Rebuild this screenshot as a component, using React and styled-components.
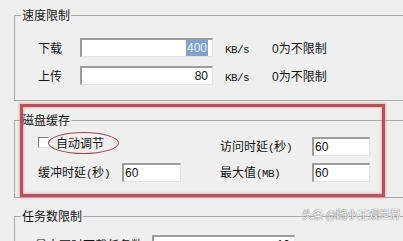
import React from 'react';
import styled, { createGlobalStyle } from 'styled-components';

const Global = createGlobalStyle`
  html, body { margin: 0; padding: 0; background: #efefef; }
  body {
    overflow: hidden;
    font-family: "Noto Sans CJK SC", "Noto Sans", sans-serif;
    font-size: 12px;
    color: #141414;
  }
`;

const Page = styled.div`
  position: relative;
  width: 403px;
  height: 241px;
  overflow: hidden;
  background: #efefef;
  padding-top: 8px;
  box-sizing: border-box;
`;

const Group = styled.fieldset`
  margin: ${(p) => p.$mt || 0}px 0 0 14px;
  width: 440px;
  box-sizing: border-box;
  border: 1px solid #a9a9a9;
  padding: 0;
  min-width: 0;
`;

const Legend = styled.legend`
  margin-left: 6px;
  padding: 0 1px;
  line-height: 14px;
  font-size: 12px;
`;

const Mono = styled.span`
  font-family: "Liberation Mono", "DejaVu Sans Mono", monospace;
  font-size: 11px;
  letter-spacing: -0.6px;
`;

const Digit = styled.span`
  font-family: "Liberation Sans", Arial, sans-serif;
  font-size: 12px;
`;

const SpeedBody = styled.div`
  display: flex;
  flex-direction: column;
  gap: 9px;
  padding: 16px 0 15px 23px;
`;

const Row = styled.div`
  display: flex;
  align-items: center;
  height: 19px;
  white-space: nowrap;
`;

const Label = styled.span`
  width: ${(p) => p.$w}px;
  flex: none;
  line-height: 19px;
  white-space: nowrap;
`;

const TextBox = styled.div`
  width: ${(p) => p.$w}px;
  height: 19px;
  flex: none;
  box-sizing: border-box;
  background: #fff;
  border-style: solid;
  border-width: 2px 1px 1px 2px;
  border-color: #9c9c9c #e4e4e4 #e4e4e4 #9c9c9c;
  font-family: "Liberation Sans", Arial, sans-serif;
  font-size: 12px;
  line-height: 16px;
  color: #111;
  text-align: ${(p) => (p.$right ? 'right' : 'left')};
  padding: 0 ${(p) => (p.$right ? 4 : 1)}px 0 ${(p) => (p.$right ? 0 : 1)}px;
  overflow: hidden;
`;

const Selected = styled.span`
  background: #7fa2cb;
  color: #eaf2ff;
  padding: 1px 1px;
`;

const Unit = styled.span`
  margin-left: 12px;
  width: 24px;
  flex: none;
`;

const Note = styled.span`
  margin-left: 23px;
`;

const Highlight = styled.div`
  position: relative;
  margin-top: 12px;
`;

const RedBox = styled.div`
  position: absolute;
  left: 20px;
  top: -9px;
  width: 365px;
  height: 93px;
  box-sizing: border-box;
  border: 3px solid #b3525a;
  box-shadow: 0 0 2px 1px rgba(235, 150, 150, 0.7), inset 0 0 2px 1px rgba(235, 150, 150, 0.6);
  pointer-events: none;
`;

const CacheBody = styled.div`
  display: grid;
  grid-template-columns: 84px 59px 39px 92px 58px;
  grid-auto-rows: 19px;
  row-gap: 7px;
  padding: 10px 0 15px 23px;
  align-items: center;
`;

const CheckWrap = styled.div`
  grid-column: span 3;
  align-self: start;
  margin-top: -5px;
  display: flex;
  align-items: center;
  height: 21px;
`;

const CheckBox = styled.span`
  width: 11px;
  height: 11px;
  box-sizing: border-box;
  background: #fff;
  border-style: solid;
  border-width: 1px;
  border-color: #7c7c7c #e8e8e8 #e8e8e8 #7c7c7c;
  flex: none;
`;

const Ellipse = styled.span`
  margin-left: -1px;
  height: 22px;
  box-sizing: border-box;
  display: inline-flex;
  align-items: center;
  padding: 0 14px 0 7px;
  border: 1px solid #9d4352;
  border-radius: 50%;
  line-height: 19px;
`;

const TaskBody = styled.div`
  padding: 12px 0 20px 20px;
`;

const Watermark = styled.div`
  position: absolute;
  left: 302px;
  top: 206px;
  font-size: 11px;
  color: #ffffff;
  text-shadow: 0 0 1px #6a6a6a, 0 0 1px #6a6a6a;
  white-space: nowrap;
  letter-spacing: -0.2px;
`;

export default function App() {
  return (
    <>
      <Global />
      <Page>
        <Group>
          <Legend>速度限制</Legend>
          <SpeedBody>
            <Row>
              <Label $w={42}>下载</Label>
              <TextBox $w={133} $right>
                <Selected>400</Selected>
              </TextBox>
              <Unit><Mono>KB/s</Mono></Unit>
              <Note><Digit>0</Digit>为不限制</Note>
            </Row>
            <Row>
              <Label $w={42}>上传</Label>
              <TextBox $w={133} $right>80</TextBox>
              <Unit><Mono>KB/s</Mono></Unit>
              <Note><Digit>0</Digit>为不限制</Note>
            </Row>
          </SpeedBody>
        </Group>

        <Highlight>
          <Group>
            <Legend>磁盘缓存</Legend>
            <CacheBody>
              <CheckWrap>
                <CheckBox />
                <Ellipse>自动调节</Ellipse>
              </CheckWrap>
              <Label $w={92}>访问时延<Mono>(</Mono>秒<Mono>)</Mono></Label>
              <TextBox $w={58}>60</TextBox>
              <Label $w={84}>缓冲时延<Mono>(</Mono>秒<Mono>)</Mono></Label>
              <TextBox $w={59}>60</TextBox>
              <span />
              <Label $w={92}>最大值<Mono>(MB)</Mono></Label>
              <TextBox $w={58}>60</TextBox>
            </CacheBody>
          </Group>
          <RedBox />
        </Highlight>

        <Group $mt={11}>
          <Legend>任务数限制</Legend>
          <TaskBody>
            <Row>
              <Label $w={117}>最大同时下载任务数</Label>
              <TextBox $w={143} $right>10</TextBox>
            </Row>
          </TaskBody>
        </Group>

        <Watermark>头条 @随小王观世界</Watermark>
      </Page>
    </>
  );
}
